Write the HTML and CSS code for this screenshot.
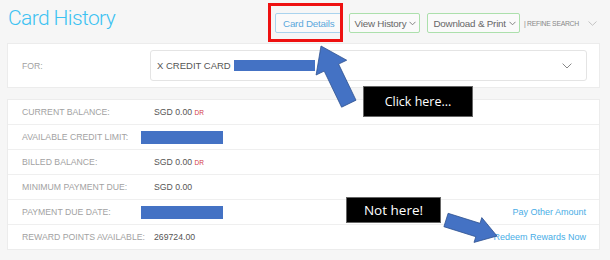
FILE: index.html
```html
<!DOCTYPE html>
<html lang="en">
<head>
    <meta charset="UTF-8">
    <meta name="viewport" content="width=device-width, initial-scale=1.0">
    <title>Card History</title>
    <link rel="stylesheet" href="styles.css">
</head>
<body>
    <div class="page">
        <div class="header">
            <h1>Card History</h1>
            <div class="toolbar">
                <button class="btn btn-blue">Card Details</button>
                <button class="btn btn-green">View History
                    <svg class="chev" width="7" height="5" viewBox="0 0 7 5"><polyline points="0.5,0.8 3.5,3.8 6.5,0.8" fill="none" stroke="#777" stroke-width="0.9"/></svg>
                </button>
                <button class="btn btn-green">Download &amp; Print
                    <svg class="chev" width="7" height="5" viewBox="0 0 7 5"><polyline points="0.5,0.8 3.5,3.8 6.5,0.8" fill="none" stroke="#777" stroke-width="0.9"/></svg>
                </button>
                <span class="refine">| REFINE SEARCH</span>
                <svg class="refine-chev" width="9" height="5" viewBox="0 0 9 5"><polyline points="0.5,0.5 4.5,4.3 8.5,0.5" fill="none" stroke="#c4c4c4" stroke-width="1"/></svg>
            </div>
        </div>

        <div class="card for-card">
            <span class="label for-label">FOR:</span>
            <div class="select">
                <span>X CREDIT CARD</span>
                <span class="redact redact-card"></span>
                <svg class="select-chev" width="10" height="6" viewBox="0 0 10 6"><polyline points="0.6,0.6 5,5 9.4,0.6" fill="none" stroke="#888" stroke-width="1"/></svg>
            </div>
        </div>

        <div class="card details">
            <div class="row">
                <span class="label">CURRENT BALANCE:</span>
                <span class="value">SGD 0.00 <span class="dr">DR</span></span>
            </div>
            <div class="row">
                <span class="label">AVAILABLE CREDIT LIMIT:</span>
                <span class="value"><span class="redact redact-row"></span></span>
            </div>
            <div class="row">
                <span class="label">BILLED BALANCE:</span>
                <span class="value">SGD 0.00 <span class="dr">DR</span></span>
            </div>
            <div class="row">
                <span class="label">MINIMUM PAYMENT DUE:</span>
                <span class="value">SGD 0.00</span>
            </div>
            <div class="row">
                <span class="label">PAYMENT DUE DATE:</span>
                <span class="value"><span class="redact redact-row"></span></span>
                <a class="link" href="#">Pay Other Amount</a>
            </div>
            <div class="row">
                <span class="label">REWARD POINTS AVAILABLE:</span>
                <span class="value">269724.00</span>
                <a class="link" href="#">Redeem Rewards Now</a>
            </div>
        </div>
    </div>

    <!-- annotations drawn over the screenshot -->
    <div class="highlight"></div>
    <svg class="arrows" width="610" height="260" viewBox="0 0 610 260">
        <polygon points="321,46 346.7,60.2 338.6,64.1 356,100.2 341.6,107.2 324.2,71.1 316.1,75" fill="#4472c4" stroke="#2f528f" stroke-width="0.8"/>
        <polygon points="497,236 474,242.4 475.8,236.7 443.9,226.7 448.1,213.3 480,223.3 481.8,217.6" fill="#4472c4" stroke="#2f528f" stroke-width="0.8"/>
    </svg>
    <div class="callout callout-click">Click here...</div>
    <div class="callout callout-not">Not here!</div>
</body>
</html>
```

FILE: styles.css
```css
body {
    margin: 0;
    padding: 0;
    background-color: #f6f6f6;
    font-family: "Liberation Sans", Arial, sans-serif;
    width: 610px;
    height: 260px;
    overflow: hidden;
    position: relative;
}
.page {
    padding: 0 10px 0 7px;
}
.header {
    display: flex;
    height: 43px;
}
h1 {
    flex: 0 0 267px;
    margin: 6px 0 0 1px;
    font-family: Roboto, "Liberation Sans", sans-serif;
    font-size: 21px;
    line-height: 24px;
    font-weight: 300;
    letter-spacing: -0.6px;
    color: #3cc2f2;
}
.toolbar {
    margin-top: 13px;
    display: flex;
    align-items: center;
    height: 20px;
}
.btn {
    display: flex;
    align-items: center;
    flex-shrink: 0;
    height: 20px;
    padding: 0 7px;
    margin-right: 6px;
    background-color: #fafafa;
    border: 1px solid #a9d3ee;
    border-radius: 2px;
    font-family: "Liberation Sans", Arial, sans-serif;
    font-size: 9.8px;
    color: #5aa8dc;
    letter-spacing: -0.2px;
    white-space: nowrap;
}
.btn-green {
    border-color: #ace0ac;
    color: #666;
    padding: 0 3px 0 5px;
    margin-right: 7px;
}
.chev {
    margin-left: 3px;
}
.refine {
    flex-shrink: 0;
    font-size: 6.8px;
    color: #888;
    letter-spacing: -0.25px;
    margin-left: -3px;
    white-space: nowrap;
}
.refine-chev {
    flex-shrink: 0;
    margin-left: 9px;
}
.card {
    background-color: #fff;
    border: 1px solid #ececec;
}
.for-card {
    display: flex;
    align-items: center;
    height: 43px;
    padding: 0 12px 0 14px;
}
.label {
    font-size: 8.7px;
    color: #a2a2a2;
    width: 132px;
    flex-shrink: 0;
}
.for-label {
    width: 128px;
}
.select {
    flex: 1;
    display: flex;
    align-items: center;
    height: 29px;
    border: 1px solid #e4e4e4;
    border-radius: 3px;
    padding: 0 6px;
    font-size: 9.5px;
    color: #555;
}
.select-chev {
    margin-left: auto;
    margin-right: 8px;
}
.redact {
    display: inline-block;
    background-color: #4472c4;
}
.redact-card {
    width: 81px;
    height: 11px;
    margin-left: 3px;
}
.redact-row {
    width: 82px;
    height: 13px;
    margin-left: -13px;
    vertical-align: middle;
}
.details {
    margin-top: 11px;
}
.row {
    display: flex;
    align-items: center;
    height: 24px;
    padding: 0 13px 0 14px;
    border-top: 1px solid #efefef;
}
.row:first-child {
    border-top: none;
}
.value {
    font-size: 8.7px;
    color: #555;
}
.dr {
    font-size: 6.5px;
    color: #d23a44;
}
.link {
    margin-left: auto;
    font-size: 9px;
    color: #49ade6;
    text-decoration: none;
}
.highlight {
    position: absolute;
    left: 268px;
    top: 3px;
    width: 69px;
    height: 33px;
    border: 3px solid #ee1111;
}
.arrows {
    position: absolute;
    left: 0;
    top: 0;
}
.callout {
    position: absolute;
    background-color: #000;
    border: 1px solid #666;
    color: #fff;
    font-family: "Open Sans", Lato, sans-serif;
    display: flex;
    align-items: center;
    justify-content: center;
}
.callout-click {
    left: 363px;
    top: 86px;
    width: 108px;
    height: 29px;
    font-size: 12.5px;
}
.callout-not {
    left: 346px;
    top: 197px;
    width: 93px;
    height: 24px;
    font-size: 13.5px;
}
```
